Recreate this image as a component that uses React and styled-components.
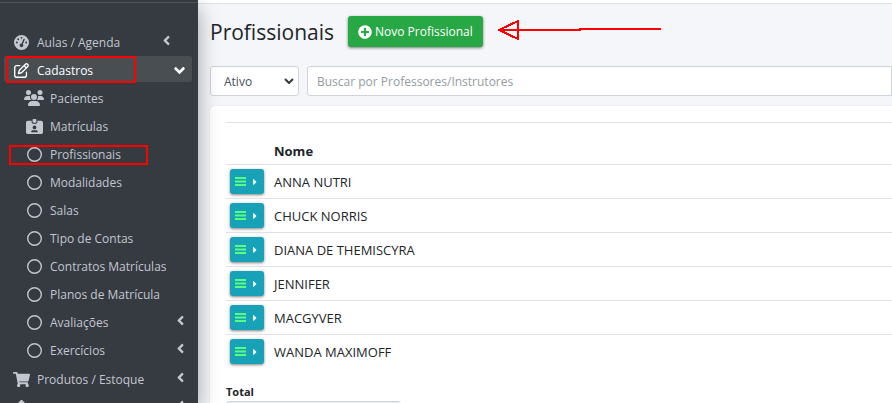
import React from 'react';
import styled, { createGlobalStyle, css } from 'styled-components';
import { FaAngleLeft, FaAngleDown, FaShoppingCart, FaCaretRight, FaPlusCircle } from 'react-icons/fa';
import {
    FaGaugeHigh,
    FaRegPenToSquare,
    FaUsers,
    FaIdCardClip,
    FaRegCircle,
    FaDiamond,
} from 'react-icons/fa6';

const menu = [
    { label: 'Aulas / Agenda', icon: FaGaugeHigh, arrow: 'near' },
    {
        label: 'Cadastros',
        icon: FaRegPenToSquare,
        arrow: 'down',
        active: true,
        mark: 'full',
        children: [
            { label: 'Pacientes', icon: FaUsers, size: 'large' },
            { label: 'Matrículas', icon: FaIdCardClip, size: 'medium' },
            { label: 'Profissionais', icon: FaRegCircle, mark: 'slim' },
            { label: 'Modalidades', icon: FaRegCircle },
            { label: 'Salas', icon: FaRegCircle },
            { label: 'Tipo de Contas', icon: FaRegCircle },
            { label: 'Contratos Matrículas', icon: FaRegCircle },
            { label: 'Planos de Matrícula', icon: FaRegCircle },
            { label: 'Avaliações', icon: FaRegCircle, arrow: 'left' },
            { label: 'Exercícios', icon: FaRegCircle, arrow: 'left' },
        ],
    },
    { label: 'Produtos / Estoque', icon: FaShoppingCart, size: 'medium', arrow: 'left' },
    { label: 'Financeiro', icon: FaDiamond, arrow: 'left' },
];

const professionals = [
    'ANNA NUTRI',
    'CHUCK NORRIS',
    'DIANA DE THEMISCYRA',
    'JENNIFER',
    'MACGYVER',
    'WANDA MAXIMOFF',
];

const iconSizes = { small: '15px', medium: '17px', large: '20px' };

const MenuEntry = ({ item, sub }) => {
    const { label, icon: Icon, size = 'small', active, arrow, mark, children } = item;

    return (
        <li>
            <MenuRow>
                <MenuLink href="#" $sub={sub} $active={active}>
                    <IconSlot $size={size}>
                        <Icon />
                    </IconSlot>
                    <span>{label}</span>
                    {arrow && (
                        <Arrow $kind={arrow}>
                            {arrow === 'down' ? <FaAngleDown /> : <FaAngleLeft />}
                        </Arrow>
                    )}
                </MenuLink>
                {mark && <Mark $slim={mark === 'slim'} />}
            </MenuRow>
            {children && (
                <SubMenu>
                    {children.map((child) => (
                        <MenuEntry key={child.label} item={child} sub />
                    ))}
                </SubMenu>
            )}
        </li>
    );
};

export default function App() {
    return (
        <>
            <GlobalStyle />
            <Layout>
                <Sidebar>
                    <Brand />
                    <Menu>
                        {menu.map((item) => (
                            <MenuEntry key={item.label} item={item} />
                        ))}
                    </Menu>
                </Sidebar>

                <Content>
                    <Navbar />
                    <Header>
                        <Title>Profissionais</Title>
                        <NewButton type="button">
                            <FaPlusCircle />
                            Novo Profissional
                        </NewButton>
                        <Pointer width="164" height="22" viewBox="0 0 164 22">
                            <path d="M1 11L20 2V20Z M1 11H82V10H163" />
                        </Pointer>
                    </Header>

                    <Filters>
                        <SelectWrap>
                            <Select aria-label="Situação" defaultValue="ativo">
                                <option value="ativo">Ativo</option>
                            </Select>
                            <SelectArrow viewBox="0 0 10 6">
                                <path d="M1 1L5 5L9 1" />
                            </SelectArrow>
                        </SelectWrap>
                        <Search
                            type="text"
                            aria-label="Buscar"
                            placeholder="Buscar por Professores/Instrutores"
                        />
                    </Filters>

                    <Card>
                        <Table>
                            <thead>
                                <tr>
                                    <ActionHead />
                                    <NameHead>Nome</NameHead>
                                </tr>
                            </thead>
                            <tbody>
                                {professionals.map((name) => (
                                    <Row key={name}>
                                        <ActionCell>
                                            <ActionButton type="button" aria-label={name}>
                                                <BarsIcon viewBox="0 0 11 9">
                                                    <path d="M0 1H11M0 4.5H11M0 8H11" />
                                                </BarsIcon>
                                                <CaretIcon />
                                            </ActionButton>
                                        </ActionCell>
                                        <NameCell>{name}</NameCell>
                                    </Row>
                                ))}
                            </tbody>
                        </Table>
                        <TotalLabel htmlFor="total">Total</TotalLabel>
                        <TotalInput id="total" readOnly />
                    </Card>
                </Content>
            </Layout>
        </>
    );
}

const GlobalStyle = createGlobalStyle`
    * {
        box-sizing: border-box;
    }

    body {
        margin: 0;
        overflow: hidden;
        background: #f4f6f9;
        color: #212529;
        font-family: 'Open Sans', 'Noto Sans', sans-serif;
        font-size: 12px;
    }

    button, input, select {
        font: inherit;
    }
`;

const Layout = styled.div`
    display: flex;
    height: 100vh;
`;

const Sidebar = styled.aside`
    position: relative;
    z-index: 1;
    flex: 0 0 198px;
    background: #363a41;
    box-shadow: 0 8px 20px rgba(0, 0, 0, 0.35);
`;

const Brand = styled.div`
    height: 3px;
    border-bottom: 1px solid #4b545c;
`;

const Menu = styled.ul`
    list-style: none;
    margin: 0;
    padding: 25px 6px 0 4px;
`;

const SubMenu = styled.ul`
    list-style: none;
    margin: 0;
    padding: 0 0 1px;
`;

const MenuRow = styled.div`
    position: relative;
    height: 28px;
`;

const MenuLink = styled.a`
    display: flex;
    align-items: center;
    height: 26px;
    padding-top: 2px;
    padding-left: ${(props) => (props.$sub ? '20px' : '7px')};
    border-radius: 3px;
    color: #c2c7d0;
    text-decoration: none;

    ${(props) =>
        props.$active &&
        css`
            background: #494e53;
            color: #fff;
        `}
`;

const IconSlot = styled.span`
    display: flex;
    justify-content: center;
    width: 20px;
    margin-right: 6px;
    font-size: ${(props) => iconSizes[props.$size]};
`;

const Arrow = styled.span`
    display: flex;
    margin-left: auto;
    margin-right: ${(props) => (props.$kind === 'near' ? '18px' : '4px')};
    padding-bottom: ${(props) => (props.$kind === 'down' ? '0' : '4px')};
    font-size: ${(props) => (props.$kind === 'down' ? '17px' : '15px')};
`;

const Mark = styled.span`
    position: absolute;
    border: 2px solid #f00;
    pointer-events: none;

    ${(props) =>
        props.$slim
            ? css`
                  inset: 5px 44px 3px 5px;
              `
            : css`
                  inset: 0 56px 1px 2px;
              `}
`;

const Content = styled.main`
    flex: 1;
    min-width: 0;
`;

const Navbar = styled.div`
    height: 4px;
    background: #fff;
    border-bottom: 1px solid #dee2e6;
`;

const Header = styled.header`
    position: relative;
    display: flex;
    align-items: center;
    gap: 14px;
    padding: 12px 12px 0;
`;

const Title = styled.h1`
    margin: 0;
    font-size: 21px;
    font-weight: 500;
    line-height: 28px;
`;

const NewButton = styled.button`
    display: flex;
    align-items: center;
    gap: 3px;
    height: 31px;
    padding: 0 10px;
    border: 0;
    border-radius: 3px;
    background: #28a745;
    color: #fff;
    box-shadow: 0 1px 3px rgba(0, 0, 0, 0.5);

    svg {
        font-size: 14px;
    }
`;

const Pointer = styled.svg`
    position: absolute;
    left: 300px;
    top: 15px;
    fill: none;
    stroke: #f00;
    stroke-width: 2;
    shape-rendering: crispEdges;
`;

const Filters = styled.div`
    display: flex;
    gap: 8px;
    padding: 19px 0 0 12px;
`;

const SelectWrap = styled.div`
    position: relative;
    flex: 0 0 89px;
`;

const Select = styled.select`
    appearance: none;
    width: 100%;
    height: 30px;
    padding: 0 13px;
    border: 1px solid #ced4da;
    border-radius: 3px;
    background: #fff;
    color: #495057;
`;

const SelectArrow = styled.svg`
    position: absolute;
    right: 5px;
    top: 12px;
    width: 10px;
    height: 6px;
    fill: none;
    stroke: #343a40;
    stroke-width: 2;
    pointer-events: none;
`;

const Search = styled.input`
    flex: 1;
    min-width: 0;
    height: 30px;
    padding: 0 9px;
    border: 1px solid #ced4da;
    border-radius: 3px 0 0 3px;
    background: #fff;

    &::placeholder {
        color: #939ba2;
        opacity: 1;
    }
`;

const Card = styled.section`
    margin: 10px 0 0 12px;
    padding: 16px 0 20px 16px;
    border-radius: 4px 0 0 4px;
    background: #fff;
    box-shadow: 0 0 1px rgba(0, 0, 0, 0.2);
`;

const Table = styled.table`
    width: 100%;
    border-collapse: collapse;
    border-top: 1px solid #dee2e6;
`;

const ActionHead = styled.td`
    width: 48px;
    border-bottom: 1px solid #dee2e6;
`;

const NameHead = styled.th`
    height: 42px;
    padding: 0 0 4px;
    border-bottom: 1px solid #dee2e6;
    text-align: left;
    vertical-align: bottom;
    font-size: 13px;
    font-weight: 700;
`;

const Row = styled.tr`
    height: 34px;

    & + & {
        border-top: 1px solid #dee2e6;
    }
`;

const ActionCell = styled.td`
    padding: 0 0 0 4px;
`;

const NameCell = styled.td`
    padding: 0;
    font-size: 13px;
`;

const ActionButton = styled.button`
    display: flex;
    align-items: center;
    justify-content: center;
    gap: 4px;
    width: 34px;
    height: 25px;
    padding: 0;
    border: 0;
    border-radius: 3px;
    background: #17a2b8;
    color: #fff;
    box-shadow: 0 1px 3px rgba(0, 0, 0, 0.5);
`;

const BarsIcon = styled.svg`
    width: 11px;
    height: 9px;
    fill: none;
    stroke: #5bff7f;
    stroke-width: 2;
`;

const CaretIcon = styled(FaCaretRight)`
    font-size: 10px;
`;

const TotalLabel = styled.label`
    display: block;
    margin-top: 15px;
    font-size: 11px;
    font-weight: 700;
    line-height: 16px;
`;

const TotalInput = styled.input`
    display: block;
    width: 175px;
    height: 30px;
    margin-top: 1px;
    border: 1px solid #ced4da;
    border-radius: 3px;
    background: #e9ecef;
`;
